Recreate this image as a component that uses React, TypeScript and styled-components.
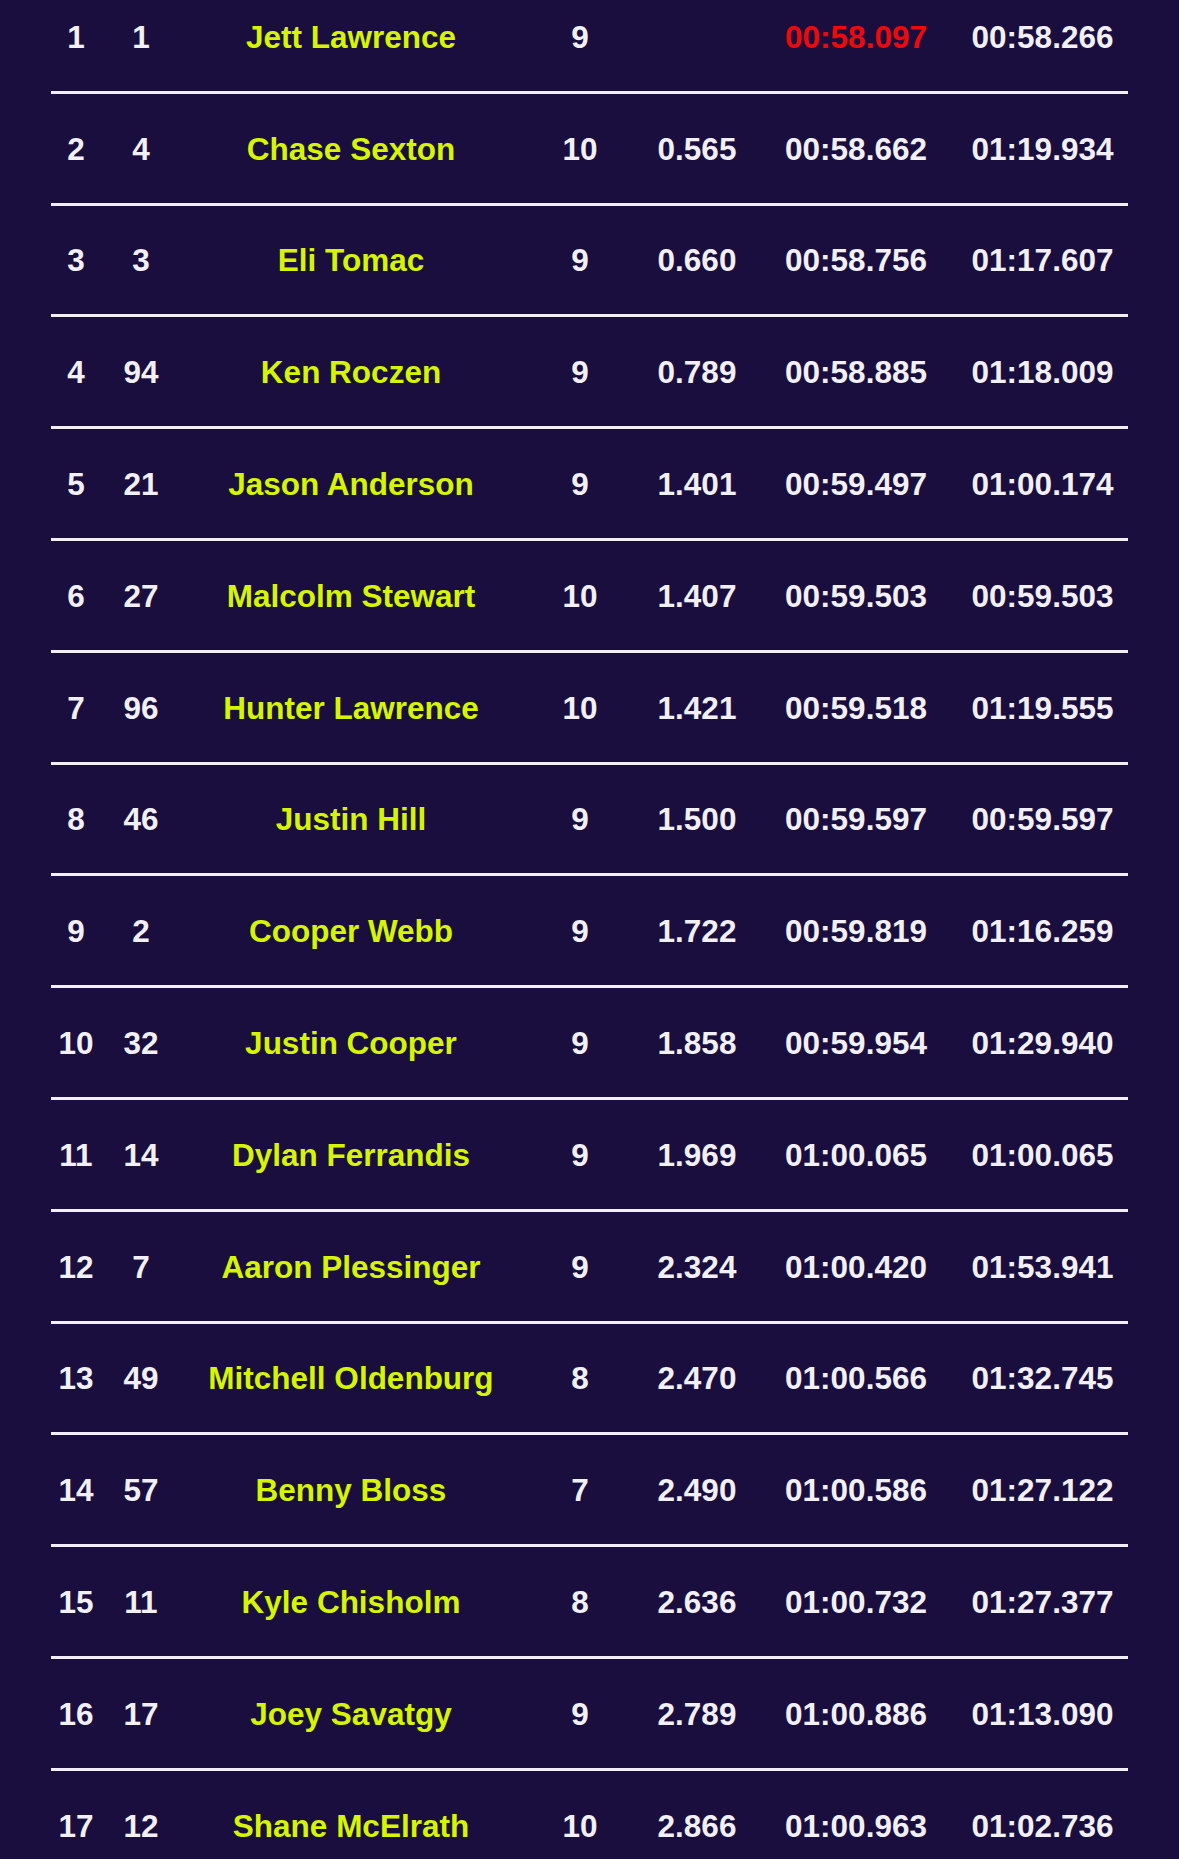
import React from 'react';
import styled, { createGlobalStyle } from 'styled-components';

type Rider = {
  pos: number;
  num: number;
  name: string;
  laps: number;
  gap: string;
  best: string;
  last: string;
  fastest?: boolean;
};

const riders: Rider[] = [
  { pos: 1, num: 1, name: 'Jett Lawrence', laps: 9, gap: '', best: '00:58.097', last: '00:58.266', fastest: true },
  { pos: 2, num: 4, name: 'Chase Sexton', laps: 10, gap: '0.565', best: '00:58.662', last: '01:19.934' },
  { pos: 3, num: 3, name: 'Eli Tomac', laps: 9, gap: '0.660', best: '00:58.756', last: '01:17.607' },
  { pos: 4, num: 94, name: 'Ken Roczen', laps: 9, gap: '0.789', best: '00:58.885', last: '01:18.009' },
  { pos: 5, num: 21, name: 'Jason Anderson', laps: 9, gap: '1.401', best: '00:59.497', last: '01:00.174' },
  { pos: 6, num: 27, name: 'Malcolm Stewart', laps: 10, gap: '1.407', best: '00:59.503', last: '00:59.503' },
  { pos: 7, num: 96, name: 'Hunter Lawrence', laps: 10, gap: '1.421', best: '00:59.518', last: '01:19.555' },
  { pos: 8, num: 46, name: 'Justin Hill', laps: 9, gap: '1.500', best: '00:59.597', last: '00:59.597' },
  { pos: 9, num: 2, name: 'Cooper Webb', laps: 9, gap: '1.722', best: '00:59.819', last: '01:16.259' },
  { pos: 10, num: 32, name: 'Justin Cooper', laps: 9, gap: '1.858', best: '00:59.954', last: '01:29.940' },
  { pos: 11, num: 14, name: 'Dylan Ferrandis', laps: 9, gap: '1.969', best: '01:00.065', last: '01:00.065' },
  { pos: 12, num: 7, name: 'Aaron Plessinger', laps: 9, gap: '2.324', best: '01:00.420', last: '01:53.941' },
  { pos: 13, num: 49, name: 'Mitchell Oldenburg', laps: 8, gap: '2.470', best: '01:00.566', last: '01:32.745' },
  { pos: 14, num: 57, name: 'Benny Bloss', laps: 7, gap: '2.490', best: '01:00.586', last: '01:27.122' },
  { pos: 15, num: 11, name: 'Kyle Chisholm', laps: 8, gap: '2.636', best: '01:00.732', last: '01:27.377' },
  { pos: 16, num: 17, name: 'Joey Savatgy', laps: 9, gap: '2.789', best: '01:00.886', last: '01:13.090' },
  { pos: 17, num: 12, name: 'Shane McElrath', laps: 10, gap: '2.866', best: '01:00.963', last: '01:02.736' },
];

const App = () => {
  return (
    <>
      <GlobalStyle />
      <Page>
        <Board>
          {riders.map((r) => (
            <Row key={r.pos}>
              <Cell>{r.pos}</Cell>
              <Cell>{r.num}</Cell>
              <Name>{r.name}</Name>
              <Cell>{r.laps}</Cell>
              <Cell>{r.gap}</Cell>
              <Cell $highlight={r.fastest}>{r.best}</Cell>
              <Cell>{r.last}</Cell>
            </Row>
          ))}
        </Board>
      </Page>
    </>
  );
};

export default App;

const GlobalStyle = createGlobalStyle`
  html, body {
    margin: 0;
    padding: 0;
    background: #1a0e3e;
    overflow: hidden;
  }
`;

const Page = styled.div`
  background: #1a0e3e;
  min-height: 1859px;
  padding: 0 51px;
  font-family: 'Liberation Sans', Arial, sans-serif;
  font-weight: bold;
  font-size: 31.5px;
`;

const Board = styled.div`
  width: 1077px;
  margin-top: -18px;
`;

const Row = styled.div`
  display: grid;
  grid-template-columns: 50px 80px 340px 118px 116px 202px 171px;
  align-items: center;
  box-sizing: border-box;
  height: 111.8px;
  padding-top: 2px;
  border-bottom: 3px solid #f2f0f7;
`;

const Cell = styled.div<{ $highlight?: boolean }>`
  text-align: center;
  white-space: nowrap;
  color: ${(p) => (p.$highlight ? '#ee0a0a' : '#f2f0f7')};
`;

const Name = styled.div`
  text-align: center;
  white-space: nowrap;
  color: #d6f500;
`;
